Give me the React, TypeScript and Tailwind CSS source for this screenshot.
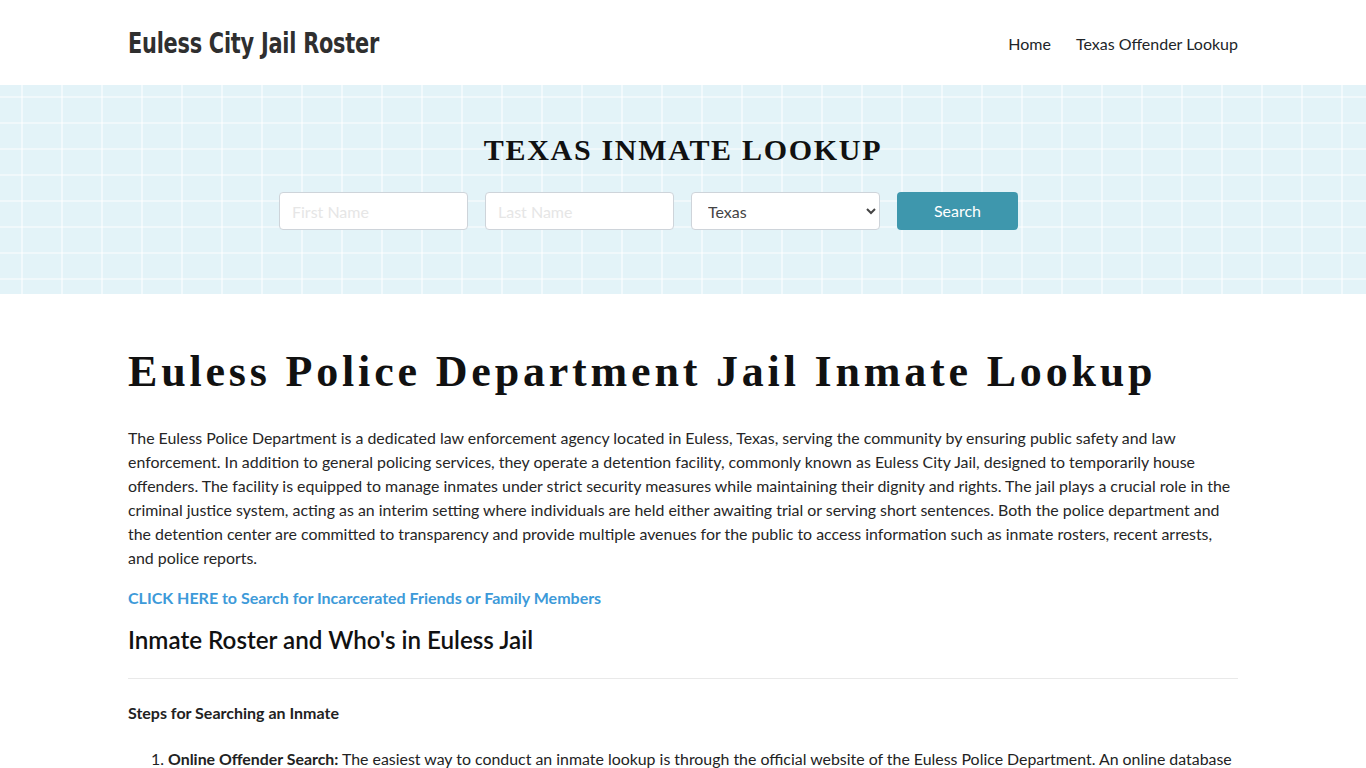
import React from "react";

export default function App() {
  return (
    <div className="min-h-screen bg-white font-['Lato','Noto_Sans',sans-serif] text-[#212529]">
      <header className="h-[85px] bg-white">
        <div className="mx-auto flex h-full w-[1140px] items-center justify-between px-[15px] pt-[2px]">
          <div className="origin-left font-['DejaVu_Sans_Condensed','DejaVu_Sans',sans-serif] text-[29px] font-bold tracking-[-0.3px] text-[#2f2f2f] [transform:scaleX(0.8)]">
            Euless City Jail Roster
          </div>
          <nav className="flex items-center gap-[25px] text-[16px] text-[#212529]">
            <a>Home</a>
            <a>Texas Offender Lookup</a>
          </nav>
        </div>
      </header>

      <section className="h-[209px] bg-[#e3f3f8] bg-[image:linear-gradient(to_right,rgba(255,255,255,0.5)_2px,transparent_2px),linear-gradient(to_bottom,rgba(255,255,255,0.45)_2px,transparent_2px)] bg-[size:40px_26px] bg-[position:21px_11px]">
        <div className="flex flex-col items-center pt-[48px]">
          <h2 className="font-['Liberation_Serif',serif] text-[30px] font-bold leading-[34px] tracking-[1.7px] text-[#111]">
            TEXAS INMATE LOOKUP
          </h2>
          <div className="mr-[69px] mt-[25px] flex items-center gap-[17px]">
            <input
              placeholder="First Name"
              className="h-[38px] w-[189px] rounded-[4px] border border-[#ced4da] bg-white px-[12px] text-[16px] outline-none placeholder:text-[#e6e6e6]"
            />
            <input
              placeholder="Last Name"
              className="h-[38px] w-[189px] rounded-[4px] border border-[#ced4da] bg-white px-[12px] text-[16px] outline-none placeholder:text-[#e6e6e6]"
            />
            <select className="h-[38px] w-[189px] rounded-[4px] border border-[#ced4da] bg-white px-[12px] text-[16px] text-[#444] outline-none">
              <option>Texas</option>
            </select>
            <button className="h-[38px] w-[121px] rounded-[4px] bg-[#3e97ad] text-[16px] text-white">
              Search
            </button>
          </div>
        </div>
      </section>

      <main className="mx-auto w-[1140px] px-[15px] pt-[50px]">
        <h1 className="font-['Liberation_Serif',serif] text-[44px] font-bold leading-[56px] tracking-[3.82px] text-[#111]">
          Euless Police Department Jail Inmate Lookup
        </h1>
        <p className="mt-[26px] text-[15.92px] leading-[24px] text-[#262626]">
          The Euless Police Department is a dedicated law enforcement agency located in Euless, Texas, serving the community by ensuring public safety and law enforcement. In addition to general policing services, they operate a detention facility, commonly known as Euless City Jail, designed to temporarily house offenders. The facility is equipped to manage inmates under strict security measures while maintaining their dignity and rights. The jail plays a crucial role in the criminal justice system, acting as an interim setting where individuals are held either awaiting trial or serving short sentences. Both the police department and the detention center are committed to transparency and provide multiple avenues for the public to access information such as inmate rosters, recent arrests, and police reports.
        </p>
        <p className="mt-[16px] text-[16px] font-bold leading-[24px] text-[#3d9ad9]">
          <a>CLICK HERE to Search for Incarcerated Friends or Family Members</a>
        </p>
        <h2 className="mt-[15px] text-[24.2px] font-semibold leading-[30px] text-[#111]">
          Inmate Roster and Who's in Euless Jail
        </h2>
        <hr className="mt-[23px] border-t border-[#e9e9e9]" />
        <p className="mt-[22px] text-[16px] font-bold leading-[24px] text-[#222]">
          Steps for Searching an Inmate
        </p>
        <ol className="mt-[22px] list-decimal pl-[40px] text-[15.9px] leading-[24px] text-[#222]">
          <li>
            <b>Online Offender Search:</b> The easiest way to conduct an inmate lookup is through the official website of the Euless Police Department. An online database is available where you can search for inmates currently housed in the Euless City Jail by entering their name or booking number.
          </li>
        </ol>
      </main>
    </div>
  );
}
